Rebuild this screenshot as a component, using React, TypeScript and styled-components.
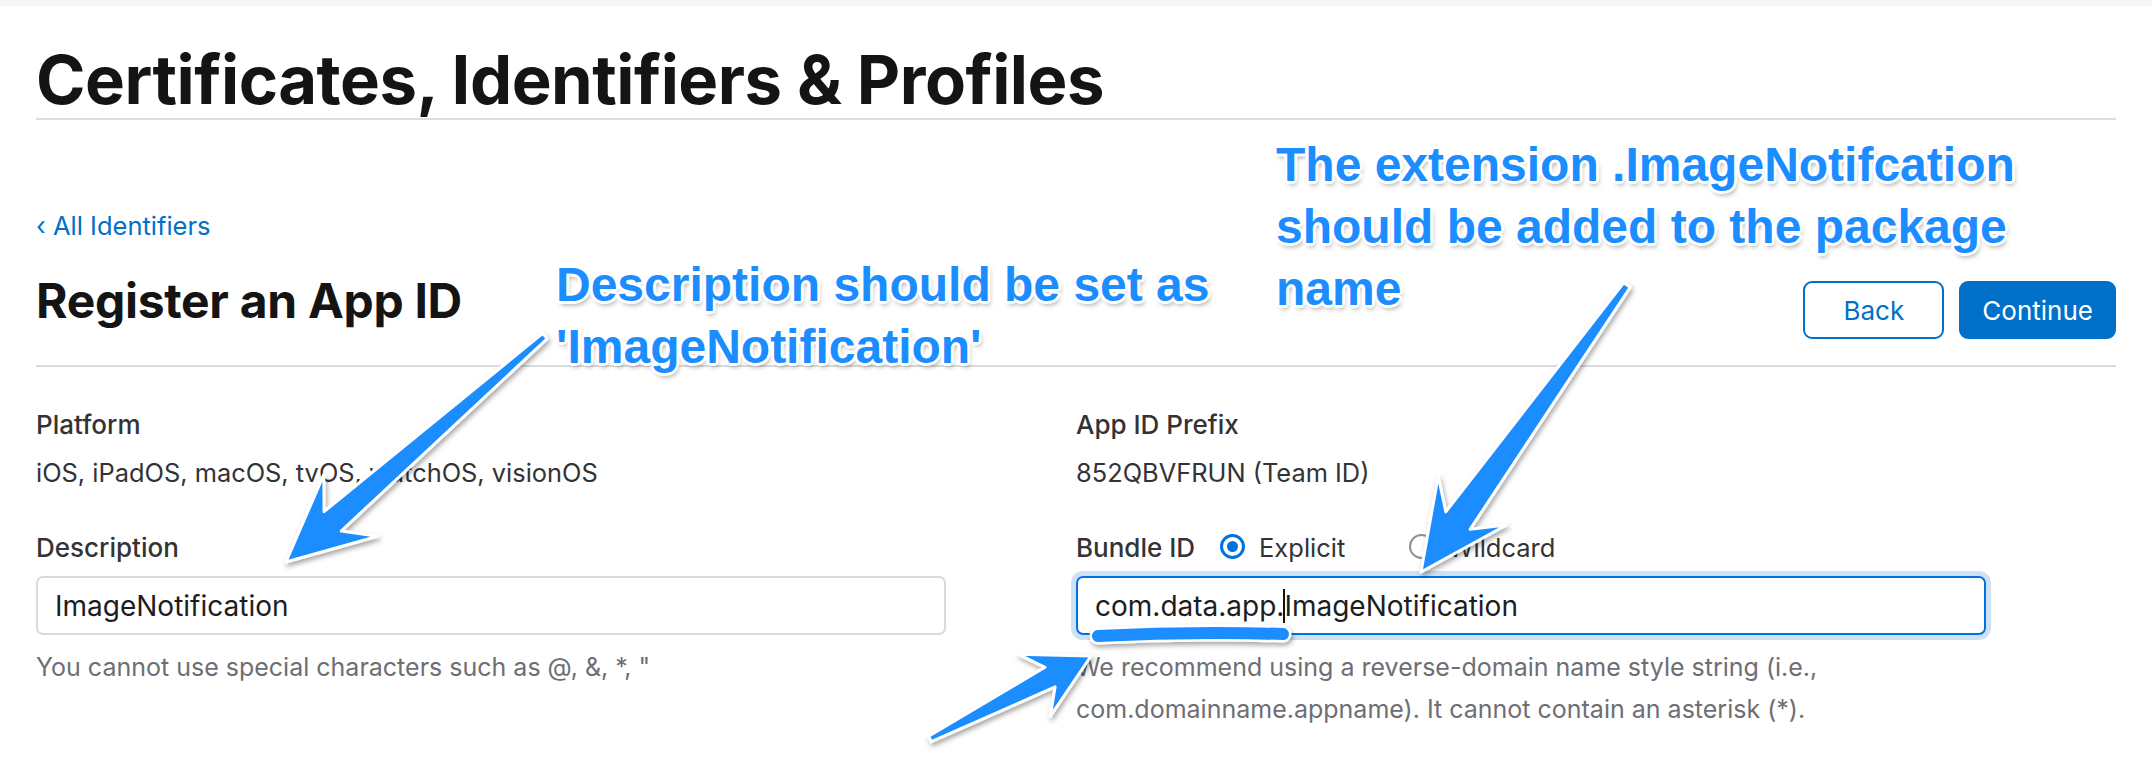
import React from "react";
import styled, { createGlobalStyle } from "styled-components";

const GlobalStyle = createGlobalStyle`
  html, body { margin: 0; padding: 0; background: #ffffff; }
  body { font-family: Inter, "Noto Sans", "Liberation Sans", sans-serif; color: #1d1d1f; }
  * { box-sizing: border-box; }
`;

const Page = styled.div`
  position: relative;
  width: 2152px;
  height: 772px;
  overflow: hidden;
  background: #fff;
`;

const TopStrip = styled.div`
  height: 6px;
  background: #f5f5f7;
`;

const Content = styled.main`
  padding: 0 36px;
`;

const PageTitle = styled.h1`
  margin: 38px 0 0;
  padding-bottom: 2px;
  border-bottom: 2px solid #dcdcdf;
  font-size: 67px;
  line-height: 72px;
  font-weight: 700;
  letter-spacing: -0.5px;
  color: #141414;
`;

const BackLink = styled.a`
  display: block;
  margin-top: 89px;
  font-size: 25.5px;
  line-height: 34px;
  color: #0070c9;
  text-decoration: none;
`;

const HeaderRow = styled.div`
  display: flex;
  align-items: flex-start;
  justify-content: space-between;
  margin-top: 31px;
  padding-bottom: 26px;
  border-bottom: 2px solid #dcdcdf;
`;

const SectionTitle = styled.h2`
  margin: 0;
  font-size: 48px;
  line-height: 54px;
  font-weight: 700;
  letter-spacing: -0.3px;
  color: #141414;
`;

const Actions = styled.div`
  display: flex;
  gap: 15px;
  margin-top: 7px;
`;

const Button = styled.button<{ $primary?: boolean }>`
  height: 58px;
  min-width: 141px;
  padding: 0 21px;
  border-radius: 9px;
  border: 2px solid #0070c9;
  background: ${(p) => (p.$primary ? "#0070c9" : "#ffffff")};
  color: ${(p) => (p.$primary ? "#ffffff" : "#0070c9")};
  font-family: Inter, sans-serif;
  font-size: 26px;
  cursor: pointer;
`;

const FormGrid = styled.div`
  display: grid;
  grid-template-columns: 1fr 1fr;
  row-gap: 41px;
  padding-top: 41px;
`;

const Field = styled.div`
  display: flex;
  flex-direction: column;
  max-width: 910px;
`;

const LabelRow = styled.div`
  display: flex;
  align-items: center;
  height: 34px;
`;

const FieldLabel = styled.label`
  font-size: 26px;
  line-height: 34px;
  font-weight: 500;
  color: #333336;
`;

const FieldValue = styled.div`
  margin-top: 14px;
  font-size: 25.4px;
  line-height: 34px;
  color: #333336;
`;

const RadioOption = styled.span<{ $gap: number }>`
  display: inline-flex;
  align-items: center;
  margin-left: ${(p) => p.$gap}px;
  font-size: 25.5px;
  line-height: 34px;
  color: #333336;
`;

const RadioCircle = styled.span<{ $checked?: boolean }>`
  display: inline-flex;
  align-items: center;
  justify-content: center;
  width: 25px;
  height: 25px;
  margin-right: 14px;
  margin-top: -4px;
  border-radius: 50%;
  border: ${(p) => (p.$checked ? "3px solid #0071e3" : "2px solid #8e8e93")};
  background: #fff;
  &::after {
    content: "";
    display: ${(p) => (p.$checked ? "block" : "none")};
    width: 11px;
    height: 11px;
    border-radius: 50%;
    background: #0071e3;
  }
`;

const TextBox = styled.div<{ $focused?: boolean }>`
  display: flex;
  align-items: center;
  height: 59px;
  margin-top: 11px;
  padding: 0 17px;
  border-radius: 7px;
  border: ${(p) => (p.$focused ? "2px solid #0071e3" : "2px solid #dadade")};
  box-shadow: ${(p) => (p.$focused ? "0 0 0 5px #cfe1f5" : "none")};
  font-size: 28px;
  color: #1d1d1f;
  white-space: pre;
`;

const Caret = styled.span`
  display: inline-block;
  width: 2px;
  height: 34px;
  margin: 0 -1px;
  background: #111;
  vertical-align: middle;
`;

const HelpText = styled.p`
  margin: 11px 0 0;
  font-size: 25px;
  line-height: 42px;
  color: #6e6e73;
`;

const Overlay = styled.svg`
  position: absolute;
  left: 0;
  top: 0;
  width: 2152px;
  height: 772px;
  pointer-events: none;
`;

const Callout = styled.div<{ $left: number; $top: number }>`
  position: absolute;
  left: ${(p) => p.$left}px;
  top: ${(p) => p.$top}px;
  font-family: "Liberation Sans", Arial, sans-serif;
  font-weight: 700;
  font-size: 48px;
  line-height: 62px;
  color: #1c8dff;
  white-space: pre;
  text-shadow:
    -2px -2px 0 #fff, 2px -2px 0 #fff, -2px 2px 0 #fff, 2px 2px 0 #fff,
    0 -3px 0 #fff, 0 3px 0 #fff, -3px 0 0 #fff, 3px 0 0 #fff,
    2px 4px 5px rgba(0, 0, 0, 0.35);
`;

type Pt = [number, number];

function arrowPoints(
  tail: Pt,
  tip: Pt,
  headLen: number,
  headHalf: number,
  tailHalf: number,
  neckHalf: number
): string {
  const dx = tip[0] - tail[0];
  const dy = tip[1] - tail[1];
  const len = Math.hypot(dx, dy);
  const ux = dx / len;
  const uy = dy / len;
  const px = -uy;
  const py = ux;
  const base: Pt = [tip[0] - ux * headLen, tip[1] - uy * headLen];
  const neck: Pt = [tip[0] - ux * headLen * 0.72, tip[1] - uy * headLen * 0.72];
  const pts: Pt[] = [
    [tail[0] + px * tailHalf, tail[1] + py * tailHalf],
    [neck[0] + px * neckHalf, neck[1] + py * neckHalf],
    [base[0] + px * headHalf, base[1] + py * headHalf],
    tip,
    [base[0] - px * headHalf, base[1] - py * headHalf],
    [neck[0] - px * neckHalf, neck[1] - py * neckHalf],
    [tail[0] - px * tailHalf, tail[1] - py * tailHalf],
  ];
  return pts.map((p) => `${p[0].toFixed(1)},${p[1].toFixed(1)}`).join(" ");
}

const arrows = [
  { tail: [545, 336] as Pt, tip: [286, 562] as Pt, headLen: 86, headHalf: 41, tailHalf: 3.5, neckHalf: 13 },
  { tail: [1627, 285] as Pt, tip: [1421, 572] as Pt, headLen: 88, headHalf: 42, tailHalf: 4, neckHalf: 15 },
  { tail: [930, 739] as Pt, tip: [1091, 656] as Pt, headLen: 64, headHalf: 35, tailHalf: 3, neckHalf: 11 },
];

export default function App() {
  return (
    <Page>
      <GlobalStyle />
      <TopStrip />
      <Content>
        <PageTitle>Certificates, Identifiers &amp; Profiles</PageTitle>
        <BackLink href="#">‹ All Identifiers</BackLink>
        <HeaderRow>
          <SectionTitle>Register an App ID</SectionTitle>
          <Actions>
            <Button>Back</Button>
            <Button $primary>Continue</Button>
          </Actions>
        </HeaderRow>
        <FormGrid>
          <Field>
            <FieldLabel>Platform</FieldLabel>
            <FieldValue>iOS, iPadOS, macOS, tvOS, watchOS, visionOS</FieldValue>
          </Field>
          <Field>
            <FieldLabel>App ID Prefix</FieldLabel>
            <FieldValue>852QBVFRUN (Team ID)</FieldValue>
          </Field>
          <Field>
            <FieldLabel>Description</FieldLabel>
            <TextBox>ImageNotification</TextBox>
            <HelpText>You cannot use special characters such as @, &amp;, *, "</HelpText>
          </Field>
          <Field>
            <LabelRow>
              <FieldLabel>Bundle ID</FieldLabel>
              <RadioOption $gap={25}>
                <RadioCircle $checked />
                Explicit
              </RadioOption>
              <RadioOption $gap={64}>
                <RadioCircle />
                Wildcard
              </RadioOption>
            </LabelRow>
            <TextBox $focused>
              com.data.app.
              <Caret />
              ImageNotification
            </TextBox>
            <HelpText>
              We recommend using a reverse-domain name style string (i.e.,
              <br />
              com.domainname.appname). It cannot contain an asterisk (*).
            </HelpText>
          </Field>
        </FormGrid>
      </Content>

      <Overlay viewBox="0 0 2152 772">
        <defs>
          <filter id="arrowShadow" x="-20%" y="-20%" width="140%" height="140%">
            <feDropShadow dx="1.5" dy="3" stdDeviation="2.5" floodColor="#000" floodOpacity="0.35" />
          </filter>
        </defs>
        <g filter="url(#arrowShadow)">
          {arrows.map((a, i) => (
            <polygon
              key={i}
              points={arrowPoints(a.tail, a.tip, a.headLen, a.headHalf, a.tailHalf, a.neckHalf)}
              fill="#1c8dff"
              stroke="#ffffff"
              strokeWidth={3}
              strokeLinejoin="round"
            />
          ))}
          <path
            d="M1098 636 Q1190 631 1283 634"
            fill="none"
            stroke="#ffffff"
            strokeWidth={17}
            strokeLinecap="round"
          />
          <path
            d="M1098 636 Q1190 631 1283 634"
            fill="none"
            stroke="#1c8dff"
            strokeWidth={12}
            strokeLinecap="round"
          />
        </g>
      </Overlay>

      <Callout $left={556} $top={254}>
        {"Description should be set as\n'ImageNotification'"}
      </Callout>
      <Callout $left={1276} $top={134}>
        {"The extension .ImageNotifcation\nshould be added to the package\nname"}
      </Callout>
    </Page>
  );
}
